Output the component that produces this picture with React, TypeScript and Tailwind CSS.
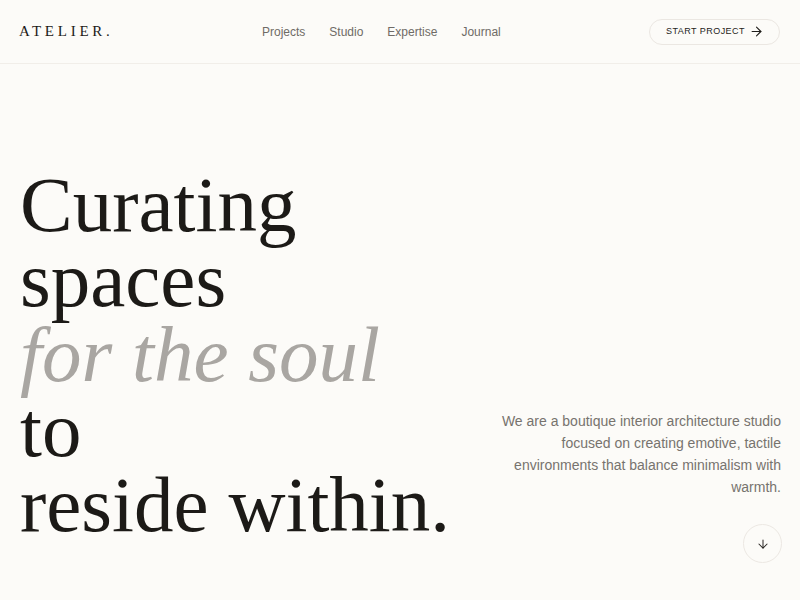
import React from 'react';
import { ArrowRight, ArrowDown } from 'lucide-react';

const NAV = ['Projects', 'Studio', 'Expertise', 'Journal'];

export default function App() {
  return (
    <div className="min-h-screen bg-[#fcfbf8] text-[#1c1a17] font-['Liberation_Sans',Arial,sans-serif]">
      <header className="h-16 px-5 flex items-center justify-between border-b border-[#f1eee9]">
        <a className="-ml-px font-['Liberation_Serif',serif] text-[15px] tracking-[0.25em] text-[#1c1a17]">ATELIER.</a>
        <nav className="flex items-center gap-[24px] text-[12px] text-[#6f6b66]">
          {NAV.map(n => <a key={n}>{n}</a>)}
        </nav>
        <button className="h-[26px] pl-[16px] pr-[15px] rounded-full border border-[#ebe7e2] flex items-center gap-[4px] text-[9px] font-medium tracking-[0.05em] text-[#1f1d1a]">
          START PROJECT
          <ArrowRight size={15} strokeWidth={1.75} />
        </button>
      </header>

      <main className="px-5 pt-[103px] flex items-end justify-between">
        <h1 className="pb-[21px] font-['Liberation_Serif',serif] text-[79px] leading-[75px] font-normal text-[#1c1a17]">
          <span className="block h-[75px]">Curating</span>
          <span className="block h-[75px]">spaces</span>
          <em className="block h-[75px] italic text-[#a9a6a2]">for the soul</em>
          <span className="block h-[75px]">to</span>
          <span className="block h-[75px]">reside within.</span>
        </h1>
        <div className="flex flex-col items-end">
          <p className="w-[290px] mr-[-1px] text-right text-[14px] leading-[22px] text-[#77736e]">
            We are a boutique interior architecture studio focused on creating emotive, tactile environments that balance minimalism with warmth.
          </p>
          <button className="mt-[26px] mr-[-2px] w-[39px] h-[39px] rounded-full border border-[#ece8e3] flex items-center justify-center text-[#2a2724]">
            <ArrowDown size={14} strokeWidth={1.75} />
          </button>
        </div>
      </main>
    </div>
  );
}
